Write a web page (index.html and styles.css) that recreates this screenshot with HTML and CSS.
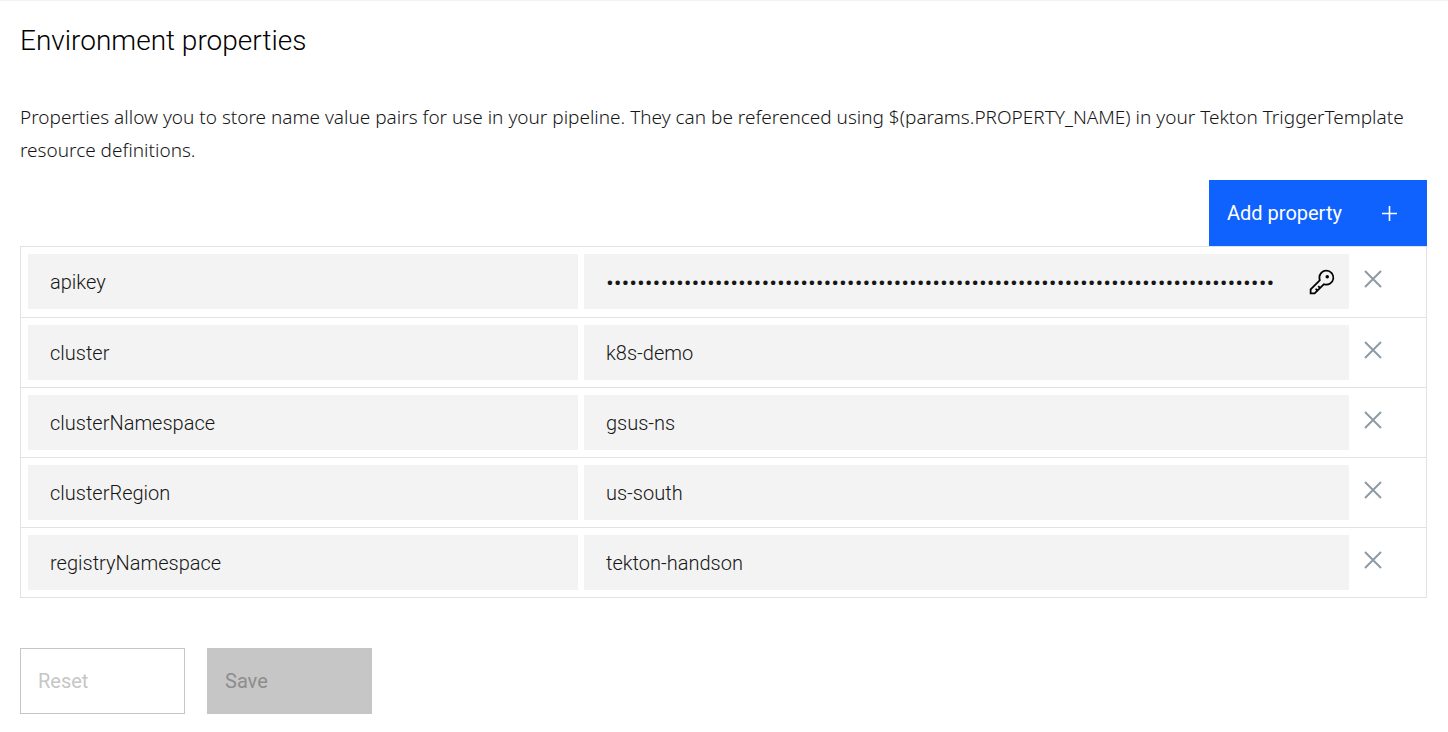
FILE: index.html
```html
<!DOCTYPE html>
<html lang="en">
<head>
<meta charset="utf-8">
<meta name="viewport" content="width=device-width, initial-scale=1">
<title>Environment properties</title>
<link rel="stylesheet" href="styles.css">
</head>
<body>
<main class="page">
  <h1 class="title">Environment properties</h1>
  <p class="intro">Properties allow you to store name value pairs for use in your pipeline. They can be referenced using $(params.PROPERTY_NAME) in your Tekton TriggerTemplate resource definitions.</p>
  <form class="form">
    <div class="toolbar">
      <button class="button button-primary" type="button">Add property
        <svg class="plus" viewBox="0 0 14 14" aria-hidden="true"><path d="M7 0v14M0 7h14"/></svg>
      </button>
    </div>
    <ul class="properties">
      <li class="property">
        <input class="field" type="text" aria-label="Property name" value="apikey">
        <div class="secret">
          <input class="field field-secret" type="password" autocomplete="off" aria-label="apikey value" value="00000000000000000000000000000000000000000000000000000000000000000000000000000000000000">
          <button class="reveal" type="button" aria-label="Choose secret">
            <svg class="key" viewBox="0 0 32 32" aria-hidden="true"><path d="M21 2a9 9 0 0 0-9 9 8.900 8.900 0 0 0 .390 2.610L2 24v6h6l10.390-10.390A9 9 0 1 0 21 2Zm0 16a7 7 0 0 1-2-.300l-1.150-.350-.870.870-3.170 3.170L12.410 20 11 21.410l1.380 1.380-1.590 1.590L9.410 23 8 24.410l1.380 1.380L7.170 28H4v-3.170L13.800 15l.870-.870L14.320 13A7 7 0 1 1 21 18Z"/><circle cx="22" cy="10" r="2"/></svg>
          </button>
        </div>
        <button class="remove" type="button" aria-label="Remove apikey"><svg class="cross" viewBox="0 0 18 18" aria-hidden="true"><path d="M1 1l16 16M17 1L1 17"/></svg></button>
      </li>
      <li class="property">
        <input class="field" type="text" aria-label="Property name" value="cluster">
        <input class="field" type="text" aria-label="cluster value" value="k8s-demo">
        <button class="remove" type="button" aria-label="Remove cluster"><svg class="cross" viewBox="0 0 18 18" aria-hidden="true"><path d="M1 1l16 16M17 1L1 17"/></svg></button>
      </li>
      <li class="property">
        <input class="field" type="text" aria-label="Property name" value="clusterNamespace">
        <input class="field" type="text" aria-label="clusterNamespace value" value="gsus-ns">
        <button class="remove" type="button" aria-label="Remove clusterNamespace"><svg class="cross" viewBox="0 0 18 18" aria-hidden="true"><path d="M1 1l16 16M17 1L1 17"/></svg></button>
      </li>
      <li class="property">
        <input class="field" type="text" aria-label="Property name" value="clusterRegion">
        <input class="field" type="text" aria-label="clusterRegion value" value="us-south">
        <button class="remove" type="button" aria-label="Remove clusterRegion"><svg class="cross" viewBox="0 0 18 18" aria-hidden="true"><path d="M1 1l16 16M17 1L1 17"/></svg></button>
      </li>
      <li class="property">
        <input class="field" type="text" aria-label="Property name" value="registryNamespace">
        <input class="field" type="text" aria-label="registryNamespace value" value="tekton-handson">
        <button class="remove" type="button" aria-label="Remove registryNamespace"><svg class="cross" viewBox="0 0 18 18" aria-hidden="true"><path d="M1 1l16 16M17 1L1 17"/></svg></button>
      </li>
    </ul>
    <div class="actions">
      <button class="button button-reset" type="reset" disabled>Reset</button>
      <button class="button button-save" type="submit" disabled>Save</button>
    </div>
  </form>
</main>
</body>
</html>
```
FILE: styles.css
```css
* { box-sizing: border-box; }

body {
  margin: 0;
  background: #fff;
  color: #161616;
  font-family: Roboto, "Noto Sans", sans-serif;
  font-size: 20px;
}

.page {
  border-top: 1px solid #f3f3f3;
  padding: 20px 21px 18px 20px;
}

.title {
  margin: 0 0 40px;
  color: #000;
  font-size: 28px;
  font-weight: 300;
  line-height: 40px;
}

.intro {
  margin: 0 0 13px;
  font-family: "Noto Sans", sans-serif;
  font-size: 19px;
  font-weight: 300;
  line-height: 33px;
}

button, input { font: inherit; }

button { cursor: pointer; }

button:disabled { cursor: not-allowed; }

.toolbar {
  display: flex;
  justify-content: flex-end;
}

.button {
  display: flex;
  align-items: center;
  justify-content: space-between;
  height: 66px;
  border: 1px solid transparent;
  border-radius: 0;
  padding: 0 17px;
}

.button-primary {
  width: 218px;
  padding-right: 29px;
  background: #0f62fe;
  border-color: #0f62fe;
  color: #fff;
}

.plus {
  width: 15px;
  height: 15px;
  fill: none;
  stroke: currentColor;
  stroke-width: 1.500;
}

.properties {
  margin: 0;
  border: 1px solid #dfe3e6;
  padding: 0;
  list-style: none;
}

.property {
  display: grid;
  grid-template-columns: 550fr 765fr 36px;
  column-gap: 6px;
  padding: 7px 35px 7px 7px;
}

.property + .property { border-top: 1px solid #dfe3e6; }

.property:first-child { padding-bottom: 8px; }

.field {
  width: 100%;
  min-width: 0;
  height: 55px;
  border: 0;
  border-radius: 0;
  padding: 0 22px;
  background: #f3f3f3;
  color: #161616;
  font-weight: 300;
}

.secret {
  display: flex;
  background: #f3f3f3;
}

.field-secret {
  flex: 1;
  padding: 2px 0 0 22px;
  font-size: 24px;
}

.reveal {
  display: grid;
  place-items: center;
  width: 54px;
  border: 0;
  padding: 1px 0 0;
  background: transparent;
}

.key {
  width: 28px;
  height: 28px;
  fill: #000;
}

.remove {
  display: grid;
  place-items: center;
  height: 50px;
  border: 0;
  padding: 0;
  background: transparent;
  color: #8c9ba5;
}

.cross {
  width: 18px;
  height: 18px;
  fill: none;
  stroke: currentColor;
  stroke-width: 2;
}

.actions {
  display: flex;
  gap: 22px;
  margin-top: 50px;
}

.button-reset,
.button-save { width: 165px; }

.button-reset {
  border-color: #c6c6c6;
  background: #fff;
  color: #c6c6c6;
}

.button-save {
  background: #c6c6c6;
  border-color: #c6c6c6;
  color: #8d8d8d;
}
```
